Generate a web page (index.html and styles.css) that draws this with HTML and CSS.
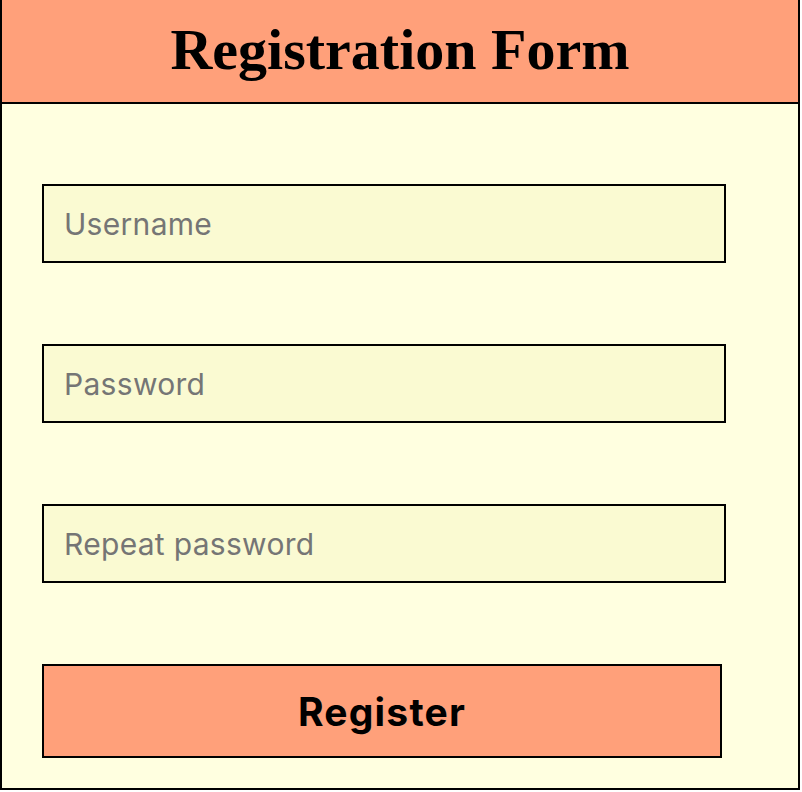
FILE: index.html
```html
<!DOCTYPE html>
<html lang="en">
<head>
  <meta charset="UTF-8" />
  <title>Registration Form</title>
  <link rel="stylesheet" href="styles.css">
</head>
<body>
  <div class="wrapper">
    <div class="header">
      <h1>Registration Form</h1>
    </div>

    <form class="form">
      <input type="text" class="field" placeholder="Username">
      <input type="password" class="field" placeholder="Password">
      <input type="password" class="field" placeholder="Repeat password">
      <button type="button" class="register-btn">Register</button>
    </form>
  </div>
</body>
</html>
```

FILE: styles.css
```css
* {
  box-sizing: border-box;
}

body {
  margin: 0;
  background: #ffffff;
}

.wrapper {
  width: 800px;
  height: 790px;
  background: #ffffe0;
  border: 2px solid #000;
  border-top: none;
}

.header {
  height: 104px;
  background: #ffa07a;
  border-bottom: 2px solid #000;
  display: flex;
  align-items: center;
  justify-content: center;
}

.header h1 {
  margin: 0 0 4px;
  font-family: "Liberation Serif", "Times New Roman", serif;
  font-size: 58px;
  font-weight: bold;
  color: #000;
}

.form {
  display: flex;
  flex-direction: column;
  align-items: flex-start;
  gap: 81px;
  padding: 80px 0 0 40px;
}

.field {
  width: 684px;
  height: 79px;
  padding: 0 20px;
  background: #fafad2;
  border: 2px solid #000;
  font-family: Inter, "Noto Sans", sans-serif;
  font-size: 30px;
  letter-spacing: 0.3px;
  color: #000;
  outline: none;
}

.field::placeholder {
  color: #757575;
}

.register-btn {
  width: 680px;
  height: 94px;
  background: #ffa07a;
  border: 2px solid #000;
  font-family: Inter, "Noto Sans", sans-serif;
  font-size: 39px;
  font-weight: bold;
  letter-spacing: 1.2px;
  color: #000;
  cursor: pointer;
}
```
